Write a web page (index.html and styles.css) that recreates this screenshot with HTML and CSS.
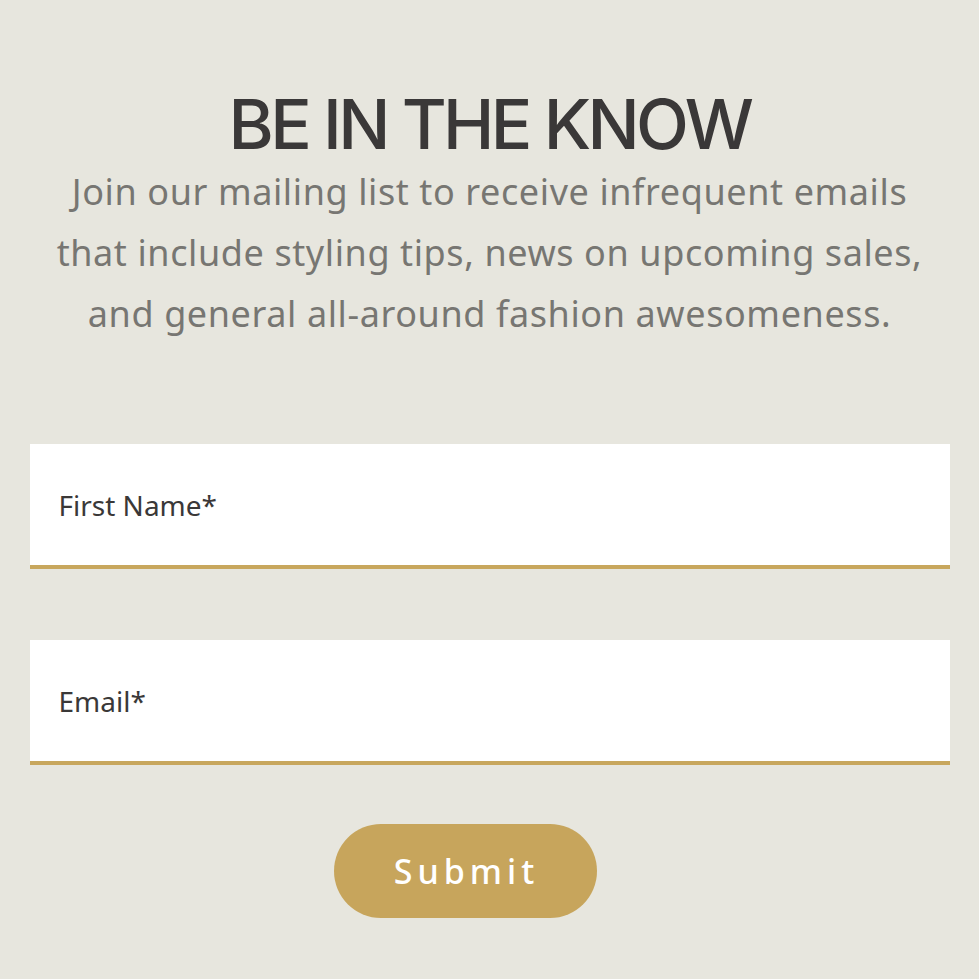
FILE: index.html
```html
<!DOCTYPE html>
<html lang="en">
<head>
<meta charset="utf-8">
<title>Be in the know</title>
<link rel="stylesheet" href="styles.css">
</head>
<body>
<section class="signup">
  <h1 class="title">BE IN THE KNOW</h1>
  <p class="intro">Join our mailing list to receive infrequent emails that include styling tips, news on upcoming sales, and general all-around fashion awesomeness.</p>
  <form class="form">
    <div class="field"><input class="input" type="text" placeholder="First Name*"></div>
    <div class="field"><input class="input" type="email" placeholder="Email*"></div>
    <button class="submit" type="button">Submit</button>
  </form>
</section>
</body>
</html>
```
FILE: styles.css
```css
html, body {
  margin: 0;
  padding: 0;
  background: #e7e6de;
}
body {
  font-family: "Noto Sans", "Open Sans", sans-serif;
}
.signup {
  padding: 81px 29px 0 29px;
  display: flex;
  flex-direction: column;
  align-items: center;
}
.title {
  margin: 3px 0 -3px 0;
  font-family: Inter, "Noto Sans", sans-serif;
  font-size: 69px;
  line-height: 80px;
  font-weight: 500;
  color: #3a3838;
  letter-spacing: -3.6px;
  text-align: center;
}
.intro {
  margin: 0;
  width: 900px;
  font-size: 36px;
  line-height: 61px;
  font-weight: 400;
  color: #777672;
  letter-spacing: 0.6px;
  text-align: center;
}
.form {
  width: 920px;
  margin-top: 100px;
  display: flex;
  flex-direction: column;
}
.field {
  margin-bottom: 71px;
}
.field:last-of-type {
  margin-bottom: 59px;
}
.input {
  display: block;
  box-sizing: border-box;
  width: 100%;
  height: 125px;
  border: 0;
  border-bottom: 4px solid #c8a75d;
  background: #ffffff;
  padding: 0 29px;
  font-family: "Noto Sans", "Open Sans", sans-serif;
  font-size: 28px;
  color: #3a3838;
  outline: none;
}
.input::placeholder {
  color: #3a3838;
  opacity: 1;
}
.submit {
  align-self: flex-start;
  margin-left: 304px;
  width: 263px;
  height: 94px;
  border: 0;
  border-radius: 47px;
  background: #c7a55c;
  color: #ffffff;
  font-family: "Noto Sans", "Open Sans", sans-serif;
  font-size: 34px;
  font-weight: 500;
  letter-spacing: 5px;
  padding: 0 0 0 3px;
  cursor: pointer;
}
```
